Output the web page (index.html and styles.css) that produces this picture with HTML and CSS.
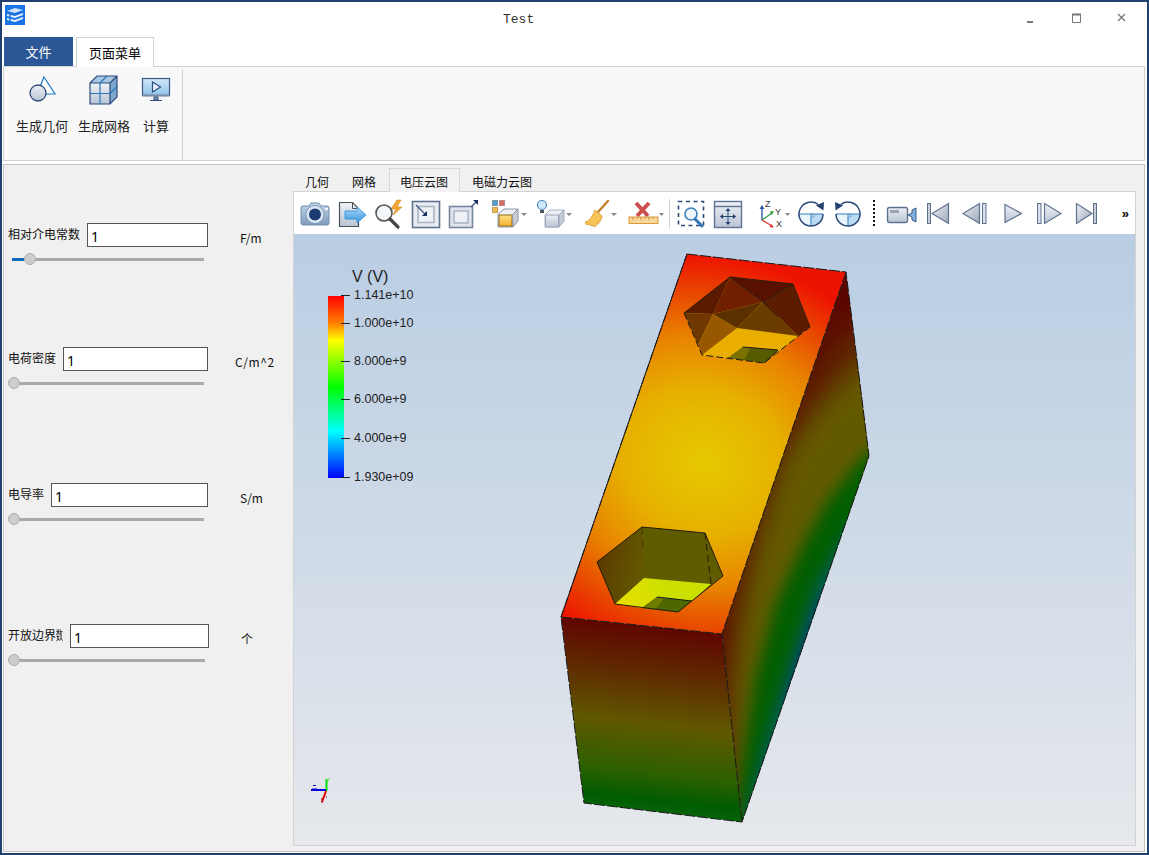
FILE: index.html
```html
<!DOCTYPE html>
<html lang="zh">
<head>
<meta charset="utf-8">
<title>Test</title>
<link rel="stylesheet" href="styles.css">
</head>
<body>
<svg class="defs" aria-hidden="true">
  <defs>
    <linearGradient id="gSteel" x1="0" y1="0" x2="0" y2="1"><stop offset="0" stop-color="#eef1f6"/><stop offset="1" stop-color="#b9c4d4"/></linearGradient>
    <linearGradient id="gTri" x1="0" y1="0" x2="1" y2="1"><stop offset="0" stop-color="#f0f2f6"/><stop offset="1" stop-color="#9aa6b8"/></linearGradient>
    <linearGradient id="gCam" x1="0" y1="0" x2="0" y2="1"><stop offset="0" stop-color="#c3d5e8"/><stop offset="1" stop-color="#7f9cbd"/></linearGradient>
    <linearGradient id="gArrow" x1="0" y1="0" x2="0" y2="1"><stop offset="0" stop-color="#a9d8f7"/><stop offset="1" stop-color="#3a96e0"/></linearGradient>
    <linearGradient id="gGold" x1="0" y1="0" x2="0" y2="1"><stop offset="0" stop-color="#ffe08a"/><stop offset="1" stop-color="#f6b02c"/></linearGradient>
    <linearGradient id="gBlueLow" x1="0" y1="0" x2="0" y2="1"><stop offset="0" stop-color="#cfe6f7"/><stop offset="1" stop-color="#8ec3ea"/></linearGradient>
  </defs>
</svg>
<div class="window">
  <header class="titlebar">
    <svg class="logo" width="20" height="20" viewBox="0 0 20 20">
      <rect width="20" height="20" fill="#1b74e4"/>
      <path d="M2 6 10 3l8 2-8 3z" fill="#cfe4fb"/>
      <path d="M2 9v2l8 2 8-3V8l-8 3zM2 13v2l8 2 8-3v-2l-8 3z" fill="#e8f2fd"/>
      <path d="M5 7v9" stroke="#1b74e4" stroke-width="1.5"/>
    </svg>
    <div class="title">Test</div>
    <svg class="wincontrols" width="114" height="14" viewBox="0 0 114 14">
      <path d="M0 10h6" stroke="#777" stroke-width="2"/>
      <path d="M45.500 2.500h8v8h-8z" fill="none" stroke="#777"/><path d="M45 2.500h9" stroke="#777" stroke-width="2"/>
      <path d="M91 2l7 7M98 2l-7 7" stroke="#777" stroke-width="1.300"/>
    </svg>
  </header>

  <nav class="menutabs">
    <div class="filetab">文件</div>
    <div class="pagetab">页面菜单</div>
  </nav>

  <section class="ribbon">
    <div class="ribbon-group">
      <div class="rbtn">
        <svg width="32" height="32" viewBox="0 0 32 32">
          <path d="M18 3 29 20H11z" fill="#fff" stroke="#1b78c4" stroke-width="1.200"/>
          <circle cx="12" cy="19" r="8" fill="url(#gSteel)" stroke="#2f4a78" stroke-width="1.300"/>
        </svg>
        <span>生成几何</span>
      </div>
      <div class="rbtn">
        <svg width="32" height="32" viewBox="0 0 32 32">
          <path d="M2 9 9 2h20v21l-7 7H2z" fill="#dfe5ee"/>
          <path d="M2 9 9 2h20l-7 7z" fill="#a9c7e2"/>
          <path d="M22 9 29 2v21l-7 7z" fill="#7fa8cf"/>
          <path d="M2 9h20v21H2z" fill="url(#gSteel)"/>
          <path d="M2 9 9 2h20v21l-7 7H2zM2 9h20v21M29 2l-7 7" fill="none" stroke="#2c4a7c" stroke-width="1.200"/>
          <path d="M12 9v21M2 19.500h20M12 9l7-7M22 19.500l7-7" fill="none" stroke="#2a78b8" stroke-width="1.200"/>
        </svg>
        <span>生成网格</span>
      </div>
      <div class="rbtn">
        <svg width="32" height="32" viewBox="0 0 32 32">
          <rect x="2.500" y="4.500" width="27" height="17" fill="url(#gBlueLow)" stroke="#3f5a86" stroke-width="1.200"/>
          <path d="M2.500 21.500h27" stroke="#7b8aa6" stroke-width="2"/>
          <path d="M12.500 8v10l8-5z" fill="#eaf3fb" stroke="#2c4a7c" stroke-width="1.200"/>
          <path d="M14 23h4v3h-4zM10 26.500h12" fill="#8d9bb2" stroke="#2c4a7c"/>
        </svg>
        <span>计算</span>
      </div>
    </div>
  </section>

  <main class="content">
    <aside class="params">
      <div class="param">
        <div class="field"><label>相对介电常数</label><input class="num" value="1"></div>
        <div class="unit">F/m</div>
        <div class="slider slider-indent"><i class="fill" style="width:12px"></i><i class="thumb"></i><i class="track"></i></div>
      </div>
      <div class="param">
        <div class="field"><label>电荷密度</label><input class="num" value="1"></div>
        <div class="unit unit-wide">C/m^2</div>
        <div class="slider"><i class="thumb"></i><i class="track"></i></div>
      </div>
      <div class="param">
        <div class="field"><label>电导率</label><input class="num" value="1"></div>
        <div class="unit">S/m</div>
        <div class="slider"><i class="thumb"></i><i class="track"></i></div>
      </div>
      <div class="param param-last">
        <div class="field"><label>开放边界<span class="squeezed">数</span></label><input class="num" value="1"></div>
        <div class="unit">个</div>
        <div class="slider"><i class="thumb"></i><i class="track"></i></div>
      </div>
    </aside>

    <section class="work">
      <div class="viewtabs">
        <div class="vtab">几何</div>
        <div class="vtab vtab-tight">网格</div>
        <div class="vtab vtab-active">电压云图</div>
        <div class="vtab">电磁力云图</div>
      </div>
      <div class="pane">
        <div class="toolbar">
          <svg width="32" height="32" viewBox="0 0 32 32">
            <path d="M4 8h6l2-3h8l2 3h6a2 2 0 0 1 2 2v15a2 2 0 0 1-2 2H4a2 2 0 0 1-2-2V10a2 2 0 0 1 2-2z" fill="url(#gCam)" stroke="#6f8cae"/>
            <circle cx="16" cy="16.500" r="9" fill="#dbe6f2" stroke="#7f9cbd"/>
            <circle cx="16" cy="16.500" r="6" fill="#1c3a72"/>
            <rect x="26" y="10" width="3" height="2" fill="#f4f8fc"/>
          </svg>
          <svg width="32" height="32" viewBox="0 0 32 32">
            <path d="M3.500 4.500h13l6 6v18h-19z" fill="url(#gSteel)" stroke="#4b4f57" stroke-width="1.200"/>
            <path d="M16.500 4.500v6h6" fill="none" stroke="#4b4f57"/>
            <path d="M9 13h12V9l9 8-9 8v-4H9z" fill="url(#gArrow)" stroke="#3f97dc"/>
          </svg>
          <svg width="32" height="32" viewBox="0 0 32 32">
            <path d="M24 2 18 11h5l-3 6 9-8h-5l4-7z" fill="#f4a533" stroke="#d98414" stroke-width=".6"/>
            <circle cx="11" cy="15" r="8" fill="#f4f7fb" stroke="#555" stroke-width="1.600"/>
            <path d="M17 21l8 8" stroke="#444" stroke-width="3.200" stroke-linecap="round"/>
          </svg>
          <svg width="32" height="32" viewBox="0 0 32 32">
            <rect x="2.500" y="3.500" width="27" height="26" fill="#e8ecf2" stroke="#5f7391" stroke-width="1.600"/>
            <rect x="8" y="8.500" width="16" height="16" fill="#eef1f6" stroke="#aab5c6" stroke-width="1.600"/>
            <path d="M6 7l9 9" stroke="#3d5680" stroke-width="1.200"/><path d="M17 18v-5l-5 5z" fill="#16315f"/>
          </svg>
          <svg width="32" height="32" viewBox="0 0 32 32">
            <rect x="2.500" y="8.500" width="23" height="21" fill="#e0e5ec" stroke="#76879f" stroke-width="1.600"/>
            <rect x="7" y="13" width="14" height="12" fill="#eef1f6" stroke="#a4b0c2" stroke-width="1.400"/>
            <path d="M24 9 29 4" stroke="#3d5680" stroke-width="1.200"/><path d="M31 2h-5l5 5z" fill="#16315f"/>
          </svg>
          <svg width="45" height="32" viewBox="0 0 45 32">
            <rect x="8.500" y="2.500" width="5" height="5" fill="#4aa2d0" stroke="#7b8ea6"/>
            <rect x="15.500" y="2.500" width="5" height="5" fill="#d86a60" stroke="#b88a88"/>
            <rect x="8.500" y="9.500" width="5" height="5" fill="#f2b84a" stroke="#c4a15c"/>
            <path d="M20 11h14l-5 5v13H14V16z" fill="#eef0f4" stroke="#8a97a8"/>
            <path d="M15 17h13v11H15z" fill="url(#gGold)" stroke="#8d6b1f"/>
            <path d="M28.500 16.500 34 11v12l-5 6z" fill="#c9ccd2" stroke="#8a97a8"/>
            <path d="M37 15h6l-3 3z" fill="#888"/>
          </svg>
          <svg width="40" height="32" viewBox="0 0 40 32">
            <circle cx="8" cy="7" r="4.500" fill="#cfe8fb" stroke="#4c8cc4" stroke-width="1.200"/>
            <path d="M6 12h4v3H6z" fill="#555"/>
            <path d="M16 12h14l-5 5v12H11V17z" fill="#eef0f4" stroke="#aab4c2"/>
            <path d="M11.500 17h13v12h-13z" fill="url(#gSteel)" stroke="#9aa6b8"/>
            <path d="M25 17l5-5v11l-5 6z" fill="#c5ccd6" stroke="#9aa6b8"/>
            <path d="M32 15h6l-3 3z" fill="#888"/>
          </svg>
          <svg width="40" height="32" viewBox="0 0 40 32">
            <path d="M29 3 19 14" stroke="#c77f2c" stroke-width="2.400" stroke-linecap="round"/>
            <path d="M16 12l7 6c-1 6-5 9-8 11l-2-2-1 1-2-2-2 1-2-3 3-1c3-3 5-6 7-11z" fill="#f7c45a" stroke="#d7962a" stroke-width=".8"/>
            <path d="M32 15h6l-3 3z" fill="#888"/>
          </svg>
          <svg width="40" height="32" viewBox="0 0 40 32">
            <path d="M12 5l12 13M25 5 13 18" stroke="#c9504c" stroke-width="4"/>
            <rect x="5" y="19" width="29" height="6.500" fill="#f8d79a" stroke="#dc9a3a"/>
            <path d="M9 19v3M13 19v2M17 19v3M21 19v2M25 19v3M29 19v2" stroke="#c98a2c"/>
            <path d="M35 15h5l-2.500 3z" fill="#888"/>
          </svg>
          <i class="tsep"></i>
          <svg width="32" height="32" viewBox="0 0 32 32">
            <rect x="3.500" y="3.500" width="25" height="24" fill="none" stroke="#2f4a78" stroke-width="1.600" stroke-dasharray="4 3.500"/>
            <circle cx="16" cy="16" r="6" fill="#eef5fb" stroke="#3b7fb8" stroke-width="1.600"/>
            <path d="M20 21l7 7" stroke="#2d75b6" stroke-width="3" stroke-linecap="round"/>
          </svg>
          <svg width="32" height="32" viewBox="0 0 32 32">
            <rect x="2.500" y="3.500" width="27" height="26" fill="url(#gSteel)" stroke="#5f7391" stroke-width="1.400"/>
            <path d="M2.500 8.500h27" stroke="#5f7391" stroke-width="1.400"/>
            <path d="M16 11v15M9 18.500h14" stroke="#2c4a7c"/>
            <path d="M16 10l-2.500 3h5zM16 27l-2.500-3h5zM8 18.500l3-2.500v5zM24 18.500l-3-2.500v5z" fill="#1f3a68"/>
          </svg>
          <svg width="41" height="32" viewBox="0 0 41 32">
            <path d="M13 22V10" stroke="#2a5aa8" stroke-width="1.400"/><path d="M13 7l-2.500 4h5z" fill="#2a5aa8"/>
            <path d="M13 22 23 15" stroke="#35a04a" stroke-width="1.400"/><path d="M25 13l-4.500.6 2.300 3.300z" fill="#35a04a"/>
            <path d="M13 22l10 6" stroke="#d83838" stroke-width="1.400"/><path d="M25 29.500l-4.500-.2 2-3.400z" fill="#d83838"/>
            <text class="axis-l" x="16" y="9">Z</text><text class="axis-l" x="26" y="17">Y</text><text class="axis-l" x="27" y="29">X</text>
            <path d="M36 15h5l-2.500 3z" fill="#888"/>
          </svg>
          <svg width="32" height="32" viewBox="0 0 32 32">
            <path d="M16 16h12a12 12 0 0 1-12 12z" fill="#bcdcf3"/>
            <path d="M4 16a12 12 0 0 0 12 12V16z" fill="#eaf4fb"/>
            <path d="M4 16h24M16 16v12" fill="none" stroke="#2d7fc0"/>
            <path d="M16 16h3v3h-3" fill="none" stroke="#6fa8d6"/>
            <path d="M23 6.300A12 12 0 1 0 28 16" fill="none" stroke="#2f4a78" stroke-width="1.500"/>
            <path d="M29 4l-.5 8.500-7.500-5z" fill="#23406f"/>
          </svg>
          <svg width="32" height="32" viewBox="0 0 32 32">
            <path d="M16 16h12a12 12 0 0 1-12 12z" fill="#bcdcf3"/>
            <path d="M4 16a12 12 0 0 0 12 12V16z" fill="#eaf4fb"/>
            <path d="M4 16h24M16 16v12" fill="none" stroke="#2d7fc0"/>
            <path d="M16 16h3v3h-3" fill="none" stroke="#6fa8d6"/>
            <path d="M9 6.300A12 12 0 1 1 4 16" fill="none" stroke="#2f4a78" stroke-width="1.500"/>
            <path d="M3 4l.5 8.500 7.500-5z" fill="#23406f"/>
          </svg>
          <svg width="10" height="32" viewBox="0 0 10 32">
            <path d="M5 2v28" stroke="#111" stroke-width="2" stroke-dasharray="2 2"/>
          </svg>
          <svg width="34" height="32" viewBox="0 0 34 32">
            <rect x="3.500" y="9.500" width="20" height="15" rx="2" fill="url(#gSteel)" stroke="#5f7391" stroke-width="1.400"/>
            <rect x="6" y="12" width="9" height="3" fill="#9aa6b8"/>
            <path d="M24 17l4-2v-3l4-2v14l-4-2v-3z" fill="#7fb0dc" stroke="#3f5a86"/>
          </svg>
          <svg width="30" height="32" viewBox="0 0 30 32">
            <rect x="4.500" y="5.500" width="3" height="20" fill="#c4ccd8" stroke="#5f7391"/>
            <path d="M25.500 5.500v20L9 15.500z" fill="url(#gTri)" stroke="#5f7391" stroke-width="1.200"/>
          </svg>
          <svg width="34" height="32" viewBox="0 0 34 32">
            <path d="M21.500 5.500v20L5 15.500z" fill="url(#gTri)" stroke="#5f7391" stroke-width="1.200"/>
            <rect x="24.500" y="5.500" width="3.500" height="20" fill="#dbe1ea" stroke="#5f7391"/>
          </svg>
          <svg width="32" height="32" viewBox="0 0 32 32">
            <path d="M8 6.500v18l16.500-9z" fill="url(#gSteel)" stroke="#5f7391" stroke-width="1.200"/>
          </svg>
          <svg width="32" height="32" viewBox="0 0 32 32">
            <rect x="3.500" y="5.500" width="3.500" height="20" fill="#dbe1ea" stroke="#5f7391"/>
            <path d="M10.500 5.500v20L27 15.500z" fill="url(#gSteel)" stroke="#5f7391" stroke-width="1.200"/>
          </svg>
          <svg width="30" height="32" viewBox="0 0 30 32">
            <path d="M5.500 5.500v20L21 15.500z" fill="url(#gTri)" stroke="#5f7391" stroke-width="1.200"/>
            <rect x="22.500" y="5.500" width="3" height="20" fill="#c4ccd8" stroke="#5f7391"/>
          </svg>
          <span class="more">»</span>
        </div>

        <div class="viewport">
          <svg class="scene" width="841" height="610" viewBox="294 234 841 610">
            <defs>
              <radialGradient id="gTop" gradientUnits="userSpaceOnUse" cx="0" cy="0" r="1" gradientTransform="translate(704 462) rotate(109.200) scale(205 235)">
                <stop offset="0" stop-color="#e6ca00"/><stop offset=".35" stop-color="#e6b000"/>
                <stop offset=".6" stop-color="#e88400"/><stop offset=".8" stop-color="#e84a00"/>
                <stop offset="1" stop-color="#ee1200"/>
              </radialGradient>
              <linearGradient id="gFront" gradientUnits="userSpaceOnUse" x1="642" y1="625" x2="622" y2="812">
                <stop offset="0" stop-color="#600500"/><stop offset=".25" stop-color="#5f2a00"/>
                <stop offset=".52" stop-color="#605800"/><stop offset=".78" stop-color="#2c6000"/>
                <stop offset=".92" stop-color="#005c00"/><stop offset="1" stop-color="#0a660a"/>
              </linearGradient>
              <linearGradient id="gBar" x1="0" y1="0" x2="0" y2="1">
                <stop offset="0" stop-color="#f00"/><stop offset=".15" stop-color="#ff8000"/>
                <stop offset=".245" stop-color="#ff0"/><stop offset=".5" stop-color="#0f0"/>
                <stop offset=".745" stop-color="#0ff"/><stop offset="1" stop-color="#00f"/>
              </linearGradient>
              <linearGradient id="gHoleWall" gradientUnits="userSpaceOnUse" x1="597" y1="560" x2="650" y2="570">
                <stop offset="0" stop-color="#5e3a00"/><stop offset="1" stop-color="#625e00"/>
              </linearGradient>
              <linearGradient id="gHoleFloor" gradientUnits="userSpaceOnUse" x1="615" y1="600" x2="665" y2="580">
                <stop offset="0" stop-color="#eadf00"/><stop offset="1" stop-color="#cbe000"/>
              </linearGradient>
              <clipPath id="cRight"><path d="M846 272 869 456 742 822 722 634z"/></clipPath>
              <filter id="fB24" x="-30%" y="-30%" width="160%" height="160%"><feGaussianBlur stdDeviation="20"/></filter>
              <filter id="fB16" x="-30%" y="-30%" width="160%" height="160%"><feGaussianBlur stdDeviation="11"/></filter>
              <filter id="fB8" x="-30%" y="-30%" width="160%" height="160%"><feGaussianBlur stdDeviation="8"/></filter>
              <filter id="fB4" x="-30%" y="-30%" width="160%" height="160%"><feGaussianBlur stdDeviation="4"/></filter>
            </defs>

            <!-- top face -->
            <path d="M687 254 846 272 722 634 561 617z" fill="url(#gTop)"/>

            <!-- right face -->
            <g clip-path="url(#cRight)">
              <rect x="700" y="250" width="200" height="600" fill="#5c0600"/>
              <path d="M900 310 850 335 805 395 770 460 748 540 733 610 724 700 728 840H900z" fill="#5e3400" filter="url(#fB24)"/>
              <path d="M900 350 858 370 822 408 788 455 764 530 745 605 732 700 735 840H900z" fill="#645a00" filter="url(#fB16)"/>
              <path d="M900 425 862 458 828 500 803 545 775 605 755 680 738 790 734 840H900z" fill="#005f00" filter="url(#fB8)"/>
              <path d="M880 495 845 535 815 590 790 665 765 745 745 825 900 840z" fill="#005a60" filter="url(#fB8)"/>
              <path d="M850 560 818 605 800 655 785 705 900 720z" fill="#003068" filter="url(#fB4)"/>
            </g>

            <!-- front face -->
            <path d="M561 617 722 634 742 822 584 803z" fill="url(#gFront)"/>

            <!-- upper hexagon -->
            <path d="M730 277 793 284 810 327 764 363 702 355 684 313z" fill="#e8b000"/>
            <path d="M737 328 798 336 778 350 743 347 728 358 702 355z" fill="#e9ae00"/>
            <path d="M730 277 793 284 763 302z" fill="#581000"/>
            <path d="M793 284 810 327 798 336 763 302z" fill="#5c1c00"/>
            <path d="M730 277 763 302 713 314z" fill="#702000"/>
            <path d="M730 277 713 314 684 313z" fill="#5a1a00"/>
            <path d="M684 313 713 314 698 345z" fill="#6e3800"/>
            <path d="M713 314 737 328 702 355 698 345z" fill="#985800"/>
            <path d="M713 314 763 302 737 328z" fill="#5a3000"/>
            <path d="M763 302 798 336 737 328z" fill="#6a3c00"/>
            <path d="M743 347 778 350 764 363 728 358z" fill="#585c00"/>
            <path d="M743 347 750 348 745 359 728 358z" fill="#7a7000"/>
            <path d="M730 277 793 284 810 327M684 313 730 277M763 302 793 284M730 277 763 302 778 317M743 347 778 350 764 363" fill="none" stroke="#2a1a10" stroke-width="1"/>
            <path d="M684 313 702 355 764 363 810 327" fill="none" stroke="#1a1a1a" stroke-dasharray="7 3"/>

            <!-- lower hexagon -->
            <path d="M597 562 642 527 705 533 723 576 678 612 615 604z" fill="#5f5c00"/>
            <path d="M597 562 642 527 644 578 615 604z" fill="url(#gHoleWall)"/>
            <path d="M644 578 711 584 692 601 657 597 642 608 615 604z" fill="url(#gHoleFloor)"/>
            <path d="M657 597 692 601 678 612 642 608z" fill="#4e6800"/>
            <path d="M657 597 664 598 655 610 642 608z" fill="#6f7c00"/>
            <path d="M597 562 642 527 705 533 723 576 678 612 615 604z" fill="none" stroke="#241a08" stroke-width="1"/>
            <path d="M705 533 711 584" fill="none" stroke="#241a08" stroke-dasharray="7 4"/>
            <path d="M642 527 643 547" fill="none" stroke="#241a08" stroke-opacity=".5" stroke-dasharray="7 6"/>
            <path d="M657 597 692 601" stroke="#1a1a1a"/>

            <!-- edges -->
            <path d="M687 254 846 272 869 456 742 822 584 803 561 617z" fill="none" stroke="#1a1a1a" stroke-dasharray="11 2"/>
            <path d="M846 272 722 634 742 822M561 617 722 634M687 254 561 617" fill="none" stroke="#1a1a1a" stroke-dasharray="11 2"/>

            <!-- colour bar -->
            <rect x="328" y="296" width="16" height="182" fill="url(#gBar)"/>
            <path d="M341 295.500h9M341 323.500h9M341 361.500h9M341 399.500h9M341 438.500h9M341 477.500h9" stroke="#222"/>
            <text class="bar-title" x="352" y="282">V (V)</text>
            <text class="bar-label" x="354" y="299">1.141e+10</text>
            <text class="bar-label" x="354" y="327">1.000e+10</text>
            <text class="bar-label" x="354" y="365">8.000e+9</text>
            <text class="bar-label" x="354" y="403">6.000e+9</text>
            <text class="bar-label" x="354" y="442">4.000e+9</text>
            <text class="bar-label" x="354" y="481">1.930e+09</text>

            <!-- orientation marker -->
            <path d="M326.500 791V779" stroke="#00e000" stroke-width="2"/>
            <path d="M327 782l2-3M328 780l2-2" stroke="#60e060"/>
            <path d="M326 790H311" stroke="#0000e8" stroke-width="2"/>
            <path d="M313 785.500h3M312 789h5" stroke="#0000c0"/>
            <path d="M326 791 322 802" stroke="#e00000" stroke-width="2"/>
            <path d="M321 799h2M322 803v-2M326 797h1" stroke="#900"/>
          </svg>
        </div>
      </div>
    </section>
  </main>
</div>
</body>
</html>
```

FILE: styles.css
```css
* { box-sizing: border-box; }

html, body {
  margin: 0;
  padding: 0;
  background: #fff;
}

body {
  font-family: "Noto Sans CJK SC", "Noto Sans", sans-serif;
  color: #000;
  font-size: 12px;
}

.defs {
  position: absolute;
  width: 0;
  height: 0;
}

svg { display: block; flex: none; }

.window {
  width: 1149px;
  height: 855px;
  border: 2px solid #20406f;
  background: #fff;
  display: flex;
  flex-direction: column;
  overflow: hidden;
}

/* title bar */
.titlebar {
  height: 35px;
  display: flex;
  align-items: flex-start;
  padding-left: 3px;
  padding-top: 3px;
  flex: none;
}

.title {
  font-family: "Liberation Mono", monospace;
  font-size: 13px;
  color: #333;
  line-height: 20px;
  margin-left: 478px;
  margin-top: 5px;
}

.wincontrols {
  margin-left: auto;
  margin-right: 6px;
  margin-top: 7px;
}

/* menu tabs */
.menutabs {
  height: 29px;
  display: flex;
  padding-left: 2px;
  flex: none;
  font-size: 13px;
}

.filetab {
  width: 69px;
  background: #2b5797;
  color: #fff;
  text-align: center;
  line-height: 30px;
}

.pagetab {
  width: 78px;
  margin-left: 3px;
  background: #fff;
  border: 1px solid #d2d2d2;
  border-bottom: 0;
  text-align: center;
  line-height: 29px;
  position: relative;
  z-index: 1;
  height: 30px;
}

/* ribbon */
.ribbon {
  height: 95px;
  margin: 0 2px 0 1px;
  background: #f8f8f8;
  border: 1px solid #d2d2d2;
  flex: none;
  display: flex;
}

.ribbon-group {
  width: 179px;
  margin-top: 2px;
  border-right: 1px solid #d2d2d2;
  display: flex;
  gap: 10px;
  padding-left: 12px;
  height: 91px;
}

.rbtn {
  display: flex;
  flex-direction: column;
  align-items: center;
  font-size: 13px;
  color: #222;
  padding-top: 5px;
}

.rbtn span {
  margin-top: 11px;
  line-height: 18px;
  white-space: nowrap;
}

/* main content */
.content {
  margin: 3px 2px 1px 1px;
  flex: 1;
  min-height: 0;
  border: 1px solid #c4c4c4;
  background: #f0f0f0;
  display: flex;
}

.params {
  width: 289px;
  flex: none;
  padding-top: 58px;
  display: grid;
  grid-template-rows: 124px 136px 141px auto;
}

.param {
  display: grid;
  grid-template-columns: 200px 1fr;
  grid-template-rows: 24px 12px;
  row-gap: 6px;
  padding-left: 4px;
}

.param-last { grid-template-columns: 201px 1fr; }

.field {
  display: flex;
  align-items: center;
  gap: 7px;
}

.field label {
  flex: none;
  line-height: 18px;
  padding-bottom: 3px;
  color: #111;
  white-space: nowrap;
}

/* the last glyph of this label is crammed into the 7px left before the input */
.squeezed {
  display: inline-block;
  width: 7px;
  transform: scaleX(.58);
  transform-origin: left center;
}

.num {
  flex: 1;
  min-width: 0;
  height: 24px;
  border: 1px solid #555;
  background: #fff;
  font-family: "Noto Sans", sans-serif;
  font-size: 14px;
  padding: 2px 3px 0;
  margin: 0;
  border-radius: 0;
  color: #000;
  outline: 0;
}

.unit {
  padding-left: 32px;
  padding-top: 6px;
  line-height: 18px;
  color: #111;
  white-space: nowrap;
}

.unit-wide {
  padding-left: 27px;
  letter-spacing: .6px;
}

.slider {
  grid-column: 1;
  display: flex;
  align-items: center;
  height: 12px;
  margin-right: 4px;
}

.slider-indent { padding-left: 4px; }

.slider i { display: block; flex: none; }

.fill {
  height: 3px;
  background: #0f6cbd;
}

.thumb {
  width: 12px;
  height: 12px;
  border-radius: 50%;
  background: #cdcdcd;
  border: 1px solid #acacac;
}

.slider .track {
  flex: 1;
  height: 3px;
  background: #a9a9a9;
}

/* work area */
.work {
  width: 843px;
  flex: none;
  padding-top: 3px;
  display: flex;
  flex-direction: column;
}

.viewtabs {
  height: 24px;
  display: flex;
  flex: none;
  position: relative;
  z-index: 1;
}

.vtab {
  padding: 0 12px;
  line-height: 27px;
  height: 24px;
  color: #111;
  white-space: nowrap;
}

.vtab-tight { margin-left: -1px; }

.vtab-active {
  border: 1px solid #d8d8d8;
  border-bottom: 0;
  background: #f2f2f2;
  padding: 0 11px 0 10px;
  margin-left: 1px;
  line-height: 25px;
  height: 24px;
}

.pane {
  margin-top: -1px;
  border: 1px solid #d2d2d2;
  height: 655px;
  background: #fff;
  display: flex;
  flex-direction: column;
  flex: none;
}

.toolbar {
  height: 42px;
  flex: none;
  background: #fff;
  display: flex;
  align-items: center;
  gap: 5px;
  padding: 2px 5px 0;
}

.tsep {
  display: block;
  width: 1px;
  height: 30px;
  background: #d4d4d4;
  flex: none;
}

.more {
  margin-left: auto;
  margin-right: 1px;
  font-family: "Liberation Sans", sans-serif;
  font-size: 13px;
  font-weight: 700;
  line-height: 16px;
}

.axis-l {
  font-family: "Liberation Sans", sans-serif;
  font-size: 9px;
  fill: #333;
}

.viewport {
  flex: 1;
  min-height: 0;
  background: linear-gradient(180deg, #b9cde3 0%, #e6e8ec 100%);
}

.bar-title {
  font-family: "Liberation Sans", sans-serif;
  font-size: 16px;
  fill: #222;
}

.bar-label {
  font-family: "Liberation Sans", sans-serif;
  font-size: 12.500px;
  fill: #222;
}
```
